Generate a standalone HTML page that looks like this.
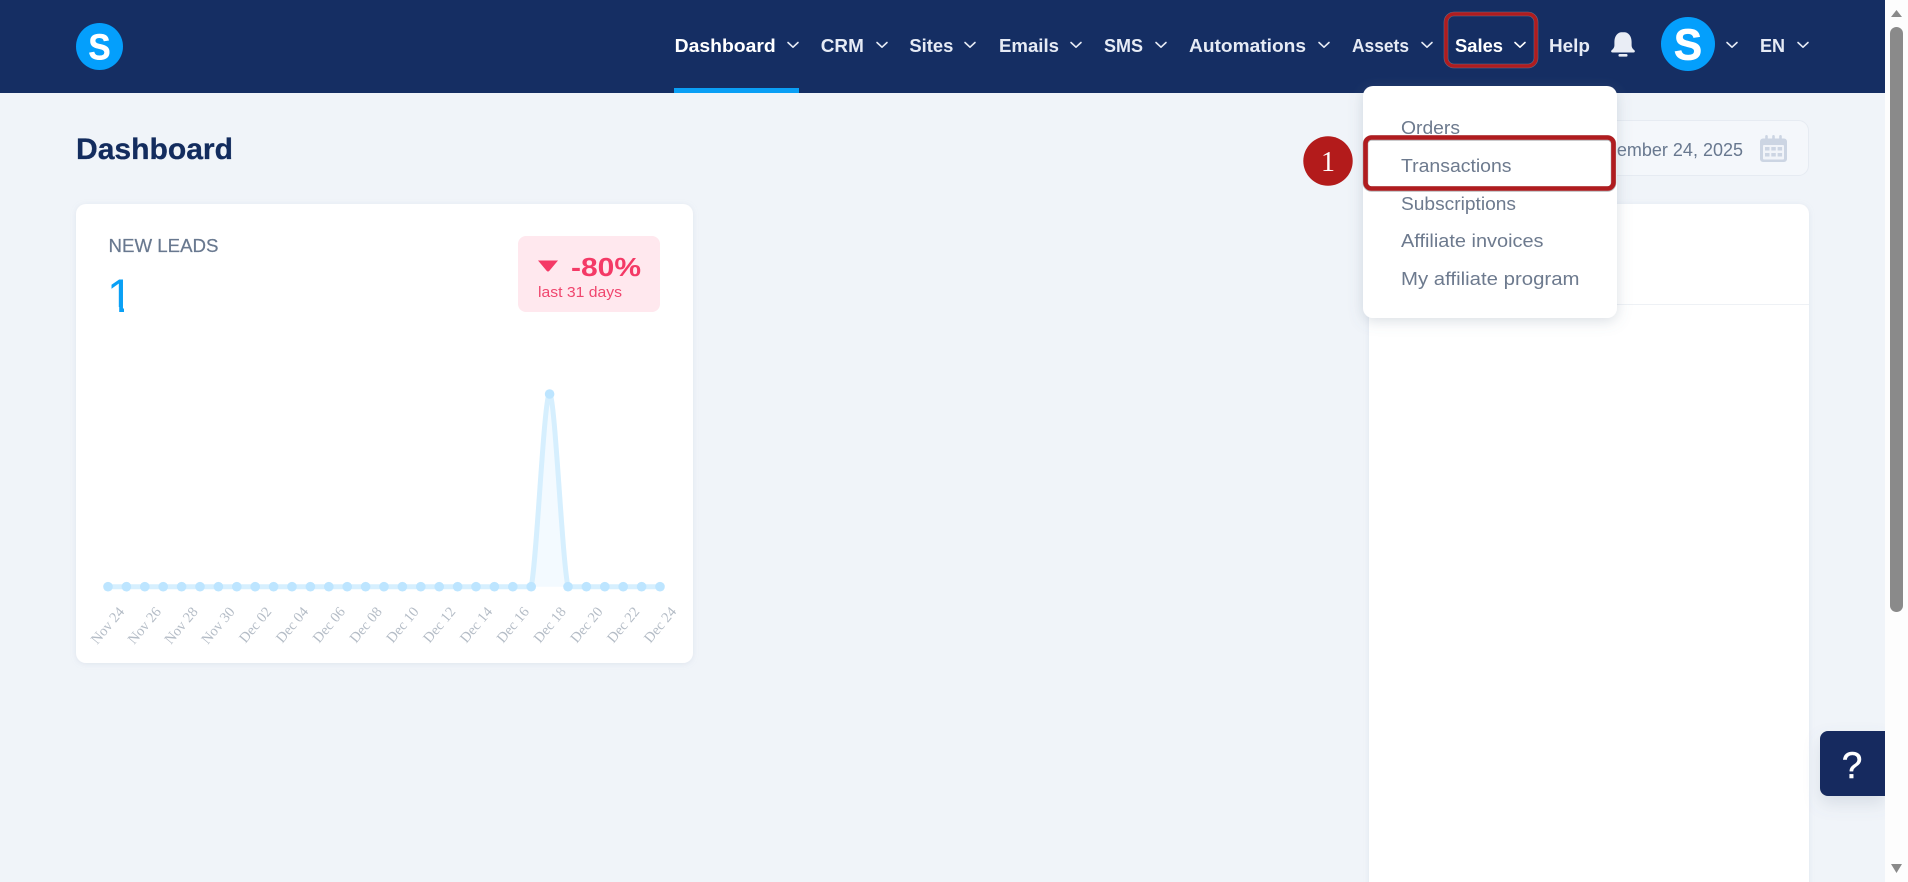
<!DOCTYPE html>
<html lang="en">
<head>
<meta charset="utf-8">
<title>Dashboard</title>
<style>
html,body{margin:0;padding:0;width:1908px;height:882px;overflow:hidden;background:#f0f4f9}
svg{display:block}
text{font-family:"Liberation Sans",sans-serif}
.nav{font-size:18px;font-weight:700;fill:#e6ebf5}
.navw{fill:#ffffff}
.chev{fill:none;stroke:#e6ebf5;stroke-width:1.6;stroke-linecap:round;stroke-linejoin:round}
.dd{font-size:18px;fill:#6d7a8e}
.lab text{font-family:"Liberation Serif",serif;font-size:14.5px;fill:#b4bcc6}
.pt{fill:#bde5ff}
</style>
</head>
<body>
<svg width="1908" height="882" viewBox="0 0 1908 882" xmlns="http://www.w3.org/2000/svg">
<defs>
<filter id="s1" x="-5%" y="-5%" width="110%" height="110%"><feDropShadow dx="0" dy="1" stdDeviation="3" flood-color="#8fa0b8" flood-opacity=".18"/></filter>
<filter id="s2" x="-15%" y="-15%" width="130%" height="130%"><feDropShadow dx="0" dy="3" stdDeviation="7" flood-color="#6a7a92" flood-opacity=".25"/></filter>
<filter id="s3" x="-30%" y="-30%" width="160%" height="170%"><feDropShadow dx="0" dy="8" stdDeviation="8" flood-color="#6a7a92" flood-opacity=".18"/></filter>
</defs>

<rect width="1908" height="882" fill="#f0f4f9"/>

<text x="76" y="159" font-size="30" font-weight="700" fill="#132c5e" stroke="#132c5e" stroke-width=".3" textLength="157" lengthAdjust="spacingAndGlyphs">Dashboard</text>

<!-- New leads card -->
<rect x="76" y="204" width="617" height="459" rx="10" fill="#fff" filter="url(#s1)"/>
<text x="108.5" y="252" font-size="18" fill="#68788f" stroke="#68788f" stroke-width=".2" textLength="110" lengthAdjust="spacingAndGlyphs">NEW LEADS</text>
<text x="107" y="312" font-size="47" fill="#0aa0f5">1</text>
<rect x="104" y="307" width="15.2" height="6" fill="#fff"/>
<rect x="124" y="307" width="12" height="6" fill="#fff"/>
<rect x="518" y="236" width="142" height="76" rx="8" fill="#ffe8ee"/>
<path d="M538 260.5h20l-8.6 10.2q-1.4 1.5-2.8 0z" fill="#f43a66"/>
<text x="571" y="276" font-size="26" font-weight="700" fill="#f43a66" textLength="70" lengthAdjust="spacingAndGlyphs">-80%</text>
<text x="538" y="297" font-size="15" fill="#f0466e" textLength="84" lengthAdjust="spacingAndGlyphs">last 31 days</text>

<!-- Chart -->
<path d="M531.2 586.7C537 560 544 394 549.6 394C555 394 562 560 568 586.7z" fill="#f3faff"/>
<path d="M108 586.7H531.2C537 560 544 394 549.6 394C555 394 562 560 568 586.7H660" fill="none" stroke="#d6effe" stroke-width="5"/>
<g class="pt">
<circle cx="108" cy="586.7" r="4.8"/><circle cx="126.4" cy="586.7" r="4.8"/><circle cx="144.8" cy="586.7" r="4.8"/><circle cx="163.2" cy="586.7" r="4.8"/><circle cx="181.6" cy="586.7" r="4.8"/><circle cx="200" cy="586.7" r="4.8"/><circle cx="218.4" cy="586.7" r="4.8"/><circle cx="236.8" cy="586.7" r="4.8"/><circle cx="255.2" cy="586.7" r="4.8"/><circle cx="273.6" cy="586.7" r="4.8"/><circle cx="292" cy="586.7" r="4.8"/><circle cx="310.4" cy="586.7" r="4.8"/><circle cx="328.8" cy="586.7" r="4.8"/><circle cx="347.2" cy="586.7" r="4.8"/><circle cx="365.6" cy="586.7" r="4.8"/><circle cx="384" cy="586.7" r="4.8"/><circle cx="402.4" cy="586.7" r="4.8"/><circle cx="420.8" cy="586.7" r="4.8"/><circle cx="439.2" cy="586.7" r="4.8"/><circle cx="457.6" cy="586.7" r="4.8"/><circle cx="476" cy="586.7" r="4.8"/><circle cx="494.4" cy="586.7" r="4.8"/><circle cx="512.8" cy="586.7" r="4.8"/><circle cx="531.2" cy="586.7" r="4.8"/><circle cx="549.6" cy="394" r="4.8"/><circle cx="568" cy="586.7" r="4.8"/><circle cx="586.4" cy="586.7" r="4.8"/><circle cx="604.8" cy="586.7" r="4.8"/><circle cx="623.2" cy="586.7" r="4.8"/><circle cx="641.6" cy="586.7" r="4.8"/><circle cx="660" cy="586.7" r="4.8"/>
</g>
<g class="lab" text-anchor="end">
<text transform="translate(125 612) rotate(-50)">Nov 24</text>
<text transform="translate(161.8 612) rotate(-50)">Nov 26</text>
<text transform="translate(198.6 612) rotate(-50)">Nov 28</text>
<text transform="translate(235.4 612) rotate(-50)">Nov 30</text>
<text transform="translate(272.2 612) rotate(-50)">Dec 02</text>
<text transform="translate(309 612) rotate(-50)">Dec 04</text>
<text transform="translate(345.8 612) rotate(-50)">Dec 06</text>
<text transform="translate(382.6 612) rotate(-50)">Dec 08</text>
<text transform="translate(419.4 612) rotate(-50)">Dec 10</text>
<text transform="translate(456.2 612) rotate(-50)">Dec 12</text>
<text transform="translate(493 612) rotate(-50)">Dec 14</text>
<text transform="translate(529.8 612) rotate(-50)">Dec 16</text>
<text transform="translate(566.6 612) rotate(-50)">Dec 18</text>
<text transform="translate(603.4 612) rotate(-50)">Dec 20</text>
<text transform="translate(640.2 612) rotate(-50)">Dec 22</text>
<text transform="translate(677 612) rotate(-50)">Dec 24</text>
</g>

<!-- Date picker -->
<rect x="1400.5" y="120.5" width="408" height="55" rx="10" fill="#f4f7fb" stroke="#e6ebf2"/>
<text x="1743" y="156" font-size="18" fill="#68788f" text-anchor="end">December 24, 2025</text>
<path d="M1763 138.5h2.2v-2.2a1.3 1.3 0 0 1 2.6 0v2.2h4.4v-2.2a1.3 1.3 0 0 1 2.6 0v2.2h4.4v-2.2a1.3 1.3 0 0 1 2.6 0v2.2h2.2a3 3 0 0 1 3 3v17.5a3 3 0 0 1-3 3h-21a3 3 0 0 1-3-3v-17.5a3 3 0 0 1 3-3z" fill="#ccd5e3"/>
<rect x="1763" y="145" width="21" height="14.5" rx="1" fill="#f1f4f9"/>
<g fill="#ccd5e3"><rect x="1765" y="147" width="4.5" height="3.5"/><rect x="1771.3" y="147" width="4.5" height="3.5"/><rect x="1777.6" y="147" width="4.5" height="3.5"/><rect x="1765" y="153" width="4.5" height="3.5"/><rect x="1771.3" y="153" width="4.5" height="3.5"/><rect x="1777.6" y="153" width="4.5" height="3.5"/></g>

<!-- Right panel -->
<rect x="1369" y="204" width="440" height="700" rx="10" fill="#fff" filter="url(#s1)"/>
<rect x="1369" y="304" width="440" height="1" fill="#eef1f5"/>

<!-- Header -->
<rect width="1885" height="93" fill="#152e63"/>
<circle cx="99.5" cy="46.5" r="23.5" fill="#049ffc"/>
<text x="88.5" y="59.5" font-size="36" font-weight="700" fill="#fff" stroke="#fff" stroke-width=".6" textLength="22" lengthAdjust="spacingAndGlyphs">S</text>

<text class="nav navw" x="674.7" y="52" textLength="101" lengthAdjust="spacingAndGlyphs">Dashboard</text>
<text class="nav" x="820.8" y="52" textLength="43" lengthAdjust="spacingAndGlyphs">CRM</text>
<text class="nav" x="909.4" y="52" textLength="44" lengthAdjust="spacingAndGlyphs">Sites</text>
<text class="nav" x="999" y="52" textLength="60" lengthAdjust="spacingAndGlyphs">Emails</text>
<text class="nav" x="1104" y="52" textLength="39" lengthAdjust="spacingAndGlyphs">SMS</text>
<text class="nav" x="1189" y="52" textLength="117" lengthAdjust="spacingAndGlyphs">Automations</text>
<text class="nav" x="1352" y="52" textLength="57" lengthAdjust="spacingAndGlyphs">Assets</text>
<text class="nav navw" x="1455" y="52" textLength="48" lengthAdjust="spacingAndGlyphs">Sales</text>
<text class="nav" x="1549" y="52" textLength="41" lengthAdjust="spacingAndGlyphs">Help</text>
<text class="nav" x="1760" y="52" textLength="25" lengthAdjust="spacingAndGlyphs">EN</text>

<g class="chev">
<path d="M788 42.5l5 4.7 5-4.7"/><path d="M877 42.5l5 4.7 5-4.7"/><path d="M965 42.5l5 4.7 5-4.7"/><path d="M1071 42.5l5 4.7 5-4.7"/><path d="M1156 42.5l5 4.7 5-4.7"/><path d="M1319 42.5l5 4.7 5-4.7"/><path d="M1422 42.5l5 4.7 5-4.7"/><path d="M1515 42.5l5 4.7 5-4.7" style="stroke:#fff"/><path d="M1727 42.5l5 4.7 5-4.7"/><path d="M1798 42.5l5 4.7 5-4.7"/>
</g>

<rect x="674" y="88" width="125" height="5" fill="#0a9ff5"/>

<path d="M1623 32c-6 0-8.6 4.6-8.6 10v3.3c0 2.4-1.4 3.9-2.9 5.1q-.6.5-.3 1.4.2.7 1.2.7h21.2q1 0 1.2-.7.3-.9-.3-1.4c-1.5-1.2-2.9-2.7-2.9-5.1V42c0-5.4-2.6-10-8.6-10z" fill="#e9edf5"/>
<rect x="1618.5" y="54" width="9" height="2.6" rx="1" fill="#e9edf5"/>

<circle cx="1688" cy="44" r="27" fill="#049ffc"/>
<text x="1674" y="59.5" font-size="44" font-weight="700" fill="#fff" stroke="#fff" stroke-width=".8" textLength="28" lengthAdjust="spacingAndGlyphs">S</text>

<!-- Sales highlight -->
<rect x="1446" y="14" width="90" height="52" rx="8" fill="none" stroke="#8c8c96" stroke-width="4.6" opacity=".7"/>
<rect x="1446" y="14" width="90" height="52" rx="8" fill="none" stroke="#b01c1f" stroke-width="3.6"/>

<!-- Dropdown -->
<rect x="1363" y="86" width="254" height="232" rx="10" fill="#fff" filter="url(#s2)"/>
<text class="dd" x="1401" y="134" textLength="59" lengthAdjust="spacingAndGlyphs">Orders</text>
<text class="dd" x="1401" y="172" textLength="110.5" lengthAdjust="spacingAndGlyphs">Transactions</text>
<text class="dd" x="1401" y="210" textLength="115" lengthAdjust="spacingAndGlyphs">Subscriptions</text>
<text class="dd" x="1401" y="247" textLength="142.5" lengthAdjust="spacingAndGlyphs">Affiliate invoices</text>
<text class="dd" x="1401" y="285" textLength="178.5" lengthAdjust="spacingAndGlyphs">My affiliate program</text>

<!-- Transactions highlight -->
<rect x="1365.5" y="138" width="248" height="51" rx="6" fill="none" stroke="#8a8a90" stroke-width="5.6" opacity=".6"/>
<rect x="1365.5" y="137.5" width="248" height="51" rx="6" fill="none" stroke="#b01c1f" stroke-width="4.6"/>

<circle cx="1328" cy="161" r="24.7" fill="#b31b1b"/>
<text x="1328" y="171" font-size="28" fill="#fff" text-anchor="middle" style="font-family:'Liberation Serif',serif">1</text>

<!-- Help button -->
<path d="M1828 731h57v65h-57a8 8 0 0 1-8-8v-49a8 8 0 0 1 8-8z" fill="#132c5e" filter="url(#s3)"/>
<text x="1852" y="778" font-size="37" fill="#fff" stroke="#fff" stroke-width=".5" text-anchor="middle">?</text>

<!-- Scrollbar -->
<rect x="1885" width="23" height="882" fill="#fdfdfd"/>
<path d="M1896.5 10l5.5 7h-11z" fill="#8a8a8a"/>
<rect x="1890" y="27" width="13" height="585" rx="6.5" fill="#8a8a8a"/>
<path d="M1891 864h11l-5.5 9z" fill="#8a8a8a"/>
</svg>
</body>
</html>
